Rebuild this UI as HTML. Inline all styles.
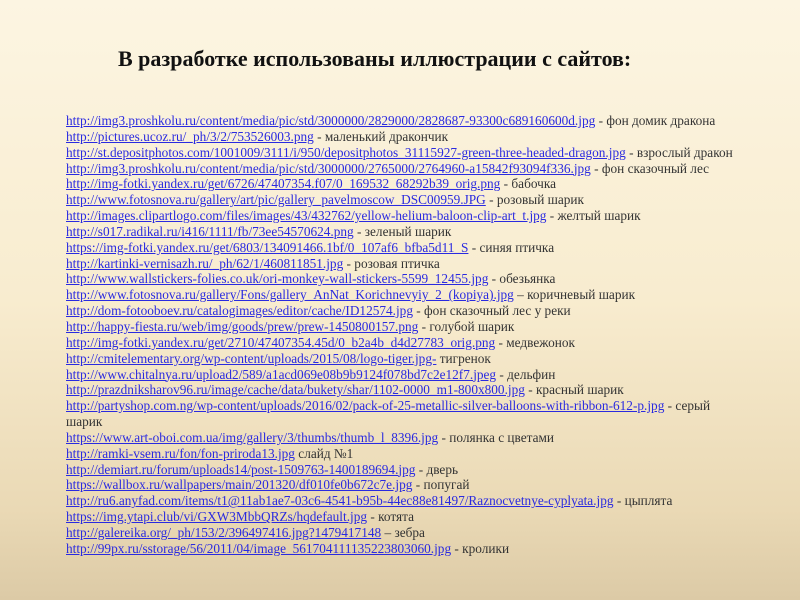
<!DOCTYPE html>
<html><head><meta charset="utf-8"><style>
html,body{margin:0;padding:0}
body{width:800px;height:600px;overflow:hidden;background:linear-gradient(#fcf5e2 0%,#f8eccf 50%,#ead9b5 85%,#dccaa6 100%);font-family:"Liberation Serif",serif;position:relative}
h1{position:absolute;left:118px;top:46px;margin:0;font-size:22px;font-weight:bold;color:#111;white-space:nowrap}
.list{position:absolute;left:66px;top:113px;width:672px;font-size:13.3px;line-height:15.85px;color:#333}
a{color:#2a2ae0;text-decoration:underline}
</style></head><body>
<h1>В разработке использованы иллюстрации с сайтов:</h1>
<div class="list">
<a>http://img3.proshkolu.ru/content/media/pic/std/3000000/2829000/2828687-93300c689160600d.jpg</a> - фон домик дракона<br>
<a>http://pictures.ucoz.ru/_ph/3/2/753526003.png</a> - маленький дракончик<br>
<a>http://st.depositphotos.com/1001009/3111/i/950/depositphotos_31115927-green-three-headed-dragon.jpg</a> - взрослый дракон<br>
<a>http://img3.proshkolu.ru/content/media/pic/std/3000000/2765000/2764960-a15842f93094f336.jpg</a> - фон сказочный лес<br>
<a>http://img-fotki.yandex.ru/get/6726/47407354.f07/0_169532_68292b39_orig.png</a> - бабочка<br>
<a>http://www.fotosnova.ru/gallery/art/pic/gallery_pavelmoscow_DSC00959.JPG</a> - розовый шарик<br>
<a>http://images.clipartlogo.com/files/images/43/432762/yellow-helium-baloon-clip-art_t.jpg</a> - желтый шарик<br>
<a>http://s017.radikal.ru/i416/1111/fb/73ee54570624.png</a> - зеленый шарик<br>
<a>https://img-fotki.yandex.ru/get/6803/134091466.1bf/0_107af6_bfba5d11_S</a> - синяя птичка<br>
<a>http://kartinki-vernisazh.ru/_ph/62/1/460811851.jpg</a> - розовая птичка<br>
<a>http://www.wallstickers-folies.co.uk/ori-monkey-wall-stickers-5599_12455.jpg</a> - обезьянка<br>
<a>http://www.fotosnova.ru/gallery/Fons/gallery_AnNat_Korichnevyiy_2_(kopiya).jpg</a> – коричневый шарик<br>
<a>http://dom-fotooboev.ru/catalogimages/editor/cache/ID12574.jpg</a> - фон сказочный лес у реки<br>
<a>http://happy-fiesta.ru/web/img/goods/prew/prew-1450800157.png</a> - голубой шарик<br>
<a>http://img-fotki.yandex.ru/get/2710/47407354.45d/0_b2a4b_d4d27783_orig.png</a> - медвежонок<br>
<a>http://cmitelementary.org/wp-content/uploads/2015/08/logo-tiger.jpg-</a> тигренок<br>
<a>http://www.chitalnya.ru/upload2/589/a1acd069e08b9b9124f078bd7c2e12f7.jpeg</a> - дельфин<br>
<a>http://prazdniksharov96.ru/image/cache/data/bukety/shar/1102-0000_m1-800x800.jpg</a> - красный шарик<br>
<a>http://partyshop.com.ng/wp-content/uploads/2016/02/pack-of-25-metallic-silver-balloons-with-ribbon-612-p.jpg</a> - серый<br>шарик<br>
<a>https://www.art-oboi.com.ua/img/gallery/3/thumbs/thumb_l_8396.jpg</a> - полянка с цветами<br>
<a>http://ramki-vsem.ru/fon/fon-priroda13.jpg</a> слайд №1<br>
<a>http://demiart.ru/forum/uploads14/post-1509763-1400189694.jpg</a> - дверь<br>
<a>https://wallbox.ru/wallpapers/main/201320/df010fe0b672c7e.jpg</a> - попугай<br>
<a>http://ru6.anyfad.com/items/t1@11ab1ae7-03c6-4541-b95b-44ec88e81497/Raznocvetnye-cyplyata.jpg</a> - цыплята<br>
<a>https://img.ytapi.club/vi/GXW3MbbQRZs/hqdefault.jpg</a> - котята<br>
<a>http://galereika.org/_ph/153/2/396497416.jpg?1479417148</a> – зебра<br>
<a>http://99px.ru/sstorage/56/2011/04/image_561704111135223803060.jpg</a> - кролики
</div>
</body></html>
